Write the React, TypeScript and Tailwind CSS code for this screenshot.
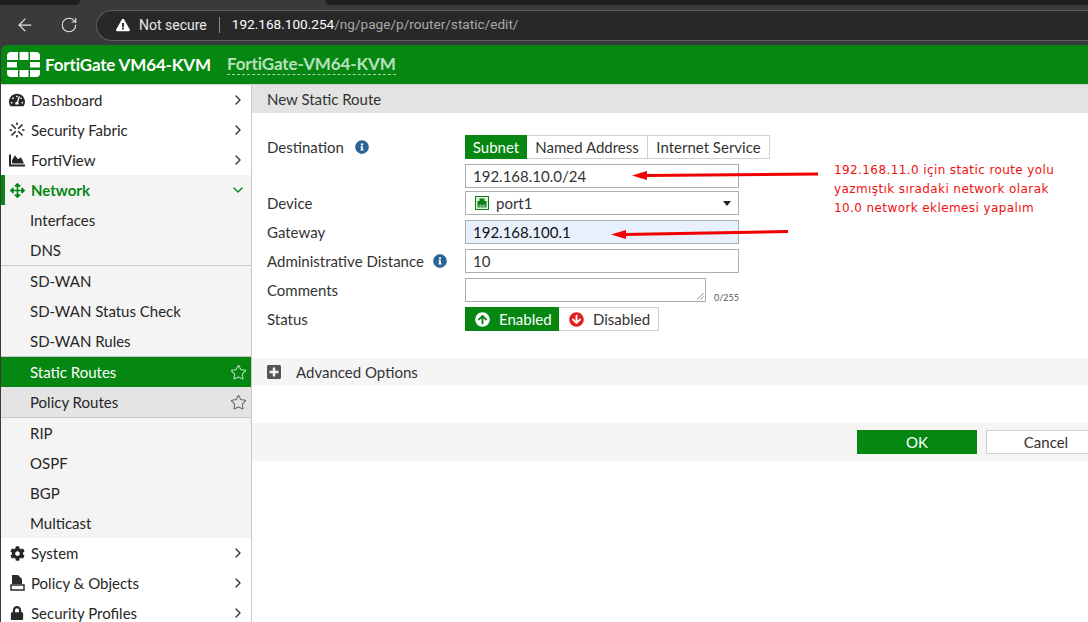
import { ArrowLeft, ChevronDown, ChevronRight, RotateCw, Star } from 'lucide-react';
import type { ReactNode } from 'react';
import {
  FaArrowCircleDown,
  FaArrowCircleUp,
  FaArrowsAlt,
  FaChartArea,
  FaCog,
  FaExclamationTriangle,
  FaInfoCircle,
  FaLock,
  FaPlusSquare,
  FaTachometerAlt,
} from 'react-icons/fa';

function FortiLogo() {
  return (
    <svg width="33" height="25" viewBox="0 0 33 25" fill="#fff">
      <path d="M0 8V4a4 4 0 0 1 4-4h7v8z" />
      <rect x="12.500" y="0" width="9" height="8" />
      <path d="M23 0h6a4 4 0 0 1 4 4v4H23z" />
      <rect x="0" y="10" width="10" height="5.500" />
      <rect x="23" y="10" width="10" height="5.500" />
      <path d="M0 18v3a4 4 0 0 0 4 4h7v-7z" />
      <rect x="12.500" y="18" width="9" height="7" />
      <path d="M23 18h10v3a4 4 0 0 1-4 4h-6z" />
    </svg>
  );
}

function FabricIcon() {
  return (
    <svg width="16" height="16" viewBox="0 0 16 16" fill="none" stroke="#2b2b2b" strokeWidth="1.600">
      <path d="M2.500 2.500L6.800 6.800M13.500 2.500L9.200 6.800M2.500 13.500L6.800 9.200M13.500 13.500L9.200 9.200" />
      <path d="M0.500 8H3M13 8h2.500M8 0.500V3M8 13v2.500" />
    </svg>
  );
}

function PolicyIcon() {
  return (
    <svg width="15" height="16" viewBox="0 0 15 16">
      <path d="M2 0h6l4 4v5H2z" fill="#2b2b2b" />
      <path d="M1 10h13v5H1z" fill="#fff" stroke="#2b2b2b" strokeWidth="1.500" />
    </svg>
  );
}

function PortIcon() {
  return (
    <svg width="14" height="14" viewBox="0 0 14 14">
      <rect x="0.500" y="0.500" width="13" height="13" fill="#dff0df" stroke="#0a7f14" />
      <path d="M2.500 5h2V2.500h5V5h2v6.500h-9z" fill="#0a7f14" />
      <path d="M4 8.500v3M5.500 8.500v3M7 8.500v3M8.500 8.500v3M10 8.500v3" stroke="#dff0df" strokeWidth="0.600" />
    </svg>
  );
}

function TopItem({ icon, label }: { icon: ReactNode; label: string }) {
  return (
    <div className="flex h-[30px] items-center pl-[8px] pr-[5px] text-[#262626]">
      <span className="flex w-[16px] justify-center">{icon}</span>
      <span className="ml-[6px] flex-1">{label}</span>
      <ChevronRight size={16} strokeWidth={2} className="text-[#333]" />
    </div>
  );
}

function SubItem({ label }: { label: string }) {
  return <div className="flex h-[30px] items-center pl-[29px] text-[#262626]">{label}</div>;
}

function FormRow({ label, info, children }: { label: string; info?: boolean; children: ReactNode }) {
  return (
    <div className="flex items-center">
      <div className="flex w-[198px] items-center text-[#333]">
        <span>{label}</span>
        {info && <FaInfoCircle size={14} className="ml-[9px] text-[#2a6496]" />}
      </div>
      {children}
    </div>
  );
}

export default function App() {
  return (
    <div className="relative h-[622px] w-[1088px] overflow-hidden bg-[#3a3a3a] font-['Lato','Noto_Sans',sans-serif] text-[15px] leading-none">
      {/* browser chrome */}
      <div className="flex h-[5px] justify-between">
        <div className="w-[80px] rounded-br-md bg-[#1f1f1f]" />
        <div className="w-[763px] rounded-bl-md bg-[#1f1f1f]" />
      </div>
      <div className="flex h-[40px] items-center font-['Roboto',sans-serif]">
        <ArrowLeft size={20} strokeWidth={1.5} className="ml-[15px] text-[#e3e3e3]" />
        <RotateCw size={18} strokeWidth={1.5} className="ml-[25px] text-[#e3e3e3]" />
        <div className="ml-[18px] flex h-[31px] flex-1 items-center rounded-l-[16px] border border-r-0 border-[#5e5e5e] bg-[#282828] pl-[19px] text-[14px]">
          <FaExclamationTriangle size={14} className="text-white" />
          <span className="ml-[9px] text-[#e8e8e8]">Not secure</span>
          <span className="ml-[12px] h-[16px] w-px bg-[#8a8a8a]" />
          <span className="ml-[12px] text-[13.6px] text-white">192.168.100.254</span>
          <span className="text-[13.6px] text-[#a9a9a9]">/ng/page/p/router/static/edit/</span>
        </div>
      </div>

      {/* fortigate header */}
      <div className="ml-px flex h-[39px] items-center rounded-tl-[6px] bg-[#058711] pl-[6px]">
        <FortiLogo />
        <span className="ml-[5px] text-[17px] font-bold tracking-[-0.15px] text-white">FortiGate VM64-KVM</span>
        <span className="ml-[16px] border-b border-dashed border-[#a5d6a9] pb-[2px] text-[17px] font-bold tracking-[-0.12px] text-[#b9e0bc]">
          FortiGate-VM64-KVM
        </span>
      </div>

      <div className="ml-px flex h-[538px] border-t border-[#d0d0d0] bg-white">
        {/* sidebar */}
        <div className="w-[251px] shrink-0 border-r border-[#c8c8c8] bg-white">
          <TopItem icon={<FaTachometerAlt size={16} />} label="Dashboard" />
          <TopItem icon={<FabricIcon />} label="Security Fabric" />
          <TopItem icon={<FaChartArea size={17} />} label="FortiView" />
          <div className="bg-[#f4f4f4]">
            <div className="flex h-[30px] items-center border-l-[4px] border-[#058711] pl-[4px] pr-[5px] font-bold text-[#058711]">
              <span className="flex w-[16px] justify-center">
                <FaArrowsAlt size={15} />
              </span>
              <span className="ml-[6px] flex-1">Network</span>
              <ChevronDown size={16} strokeWidth={2} />
            </div>
            <SubItem label="Interfaces" />
            <SubItem label="DNS" />
            <div className="border-t border-[#c8c8c8]" />
            <SubItem label="SD-WAN" />
            <SubItem label="SD-WAN Status Check" />
            <SubItem label="SD-WAN Rules" />
            <div className="border-t border-[#c8c8c8]" />
            <div className="flex h-[30px] items-center justify-between bg-[#058711] pl-[29px] pr-[4px] text-white">
              <span>Static Routes</span>
              <Star size={17} strokeWidth={1.5} className="text-[#b9e0bc]" />
            </div>
            <div className="flex h-[30px] items-center justify-between bg-[#e4e4e4] pl-[29px] pr-[4px] text-[#262626]">
              <span>Policy Routes</span>
              <Star size={17} strokeWidth={1.5} className="text-[#666]" />
            </div>
            <div className="border-t border-[#c8c8c8]" />
            <SubItem label="RIP" />
            <SubItem label="OSPF" />
            <SubItem label="BGP" />
            <SubItem label="Multicast" />
          </div>
          <TopItem icon={<FaCog size={15} />} label="System" />
          <TopItem icon={<PolicyIcon />} label="Policy & Objects" />
          <TopItem icon={<FaLock size={14} />} label="Security Profiles" />
        </div>

        {/* main */}
        <div className="min-w-0 flex-1">
          <div className="flex h-[28px] items-center bg-[#e3e3e3] pl-[15px] text-[#333]">New Static Route</div>

          <div className="flex flex-col gap-[5px] pl-[15px] pt-[22px]">
            <div className="flex">
              <div className="flex h-[24px] w-[198px] items-center text-[#333]">
                <span>Destination</span>
                <FaInfoCircle size={14} className="ml-[11px] text-[#2a6496]" />
              </div>
              <div className="flex flex-col gap-[5px]">
                <div className="flex h-[24px] w-[305px] border border-[#d0d0d0] text-[#333]">
                  <div className="-m-px flex w-[62px] items-center justify-center bg-[#058711] text-white">Subnet</div>
                  <div className="ml-px flex w-[121px] items-center justify-center border-r border-[#d0d0d0]">Named Address</div>
                  <div className="flex flex-1 items-center justify-center">Internet Service</div>
                </div>
                <div className="flex h-[24px] w-[274px] items-center border border-[#adadad] pl-[7px] text-[#333]">192.168.10.0/24</div>
              </div>
            </div>
            <div className="-mt-[2px]">
              <FormRow label="Device">
                <div className="flex h-[24px] w-[274px] items-center border border-[#adadad] pl-[9px] pr-[6px] text-[#333]">
                  <PortIcon />
                  <span className="ml-[7px] flex-1">port1</span>
                  <span className="mr-px h-0 w-0 border-x-[4.500px] border-t-[5px] border-x-transparent border-t-[#222]" />
                </div>
              </FormRow>
            </div>
            <FormRow label="Gateway">
              <div className="flex h-[24px] w-[274px] items-center border border-[#adadad] bg-[#e8f0fe] pl-[7px] text-[#111]">192.168.100.1</div>
            </FormRow>
            <FormRow label="Administrative Distance" info>
              <div className="flex h-[24px] w-[274px] items-center border border-[#adadad] pl-[7px] text-[#333]">10</div>
            </FormRow>
            <FormRow label="Comments">
              <div className="relative h-[24px] w-[241px] border border-[#adadad]">
                <svg width="8" height="8" viewBox="0 0 8 8" className="absolute bottom-px right-px" stroke="#666" strokeWidth="0.800">
                  <path d="M1 7.500L7.500 1M4.500 7.500L7.500 4.500" />
                </svg>
              </div>
              <span className="ml-[8px] self-end text-[9px] text-[#555]">0/255</span>
            </FormRow>
            <FormRow label="Status">
              <div className="flex h-[24px] text-[#333]">
                <div className="flex w-[94px] items-center bg-[#058711] pl-[10px] text-white">
                  <FaArrowCircleUp size={15} />
                  <span className="ml-[9px]">Enabled</span>
                </div>
                <div className="flex w-[100px] items-center border border-l-0 border-[#d0d0d0] pl-[10px]">
                  <FaArrowCircleDown size={15} className="text-[#e02020]" />
                  <span className="ml-[9px]">Disabled</span>
                </div>
              </div>
            </FormRow>
          </div>

          <div className="mt-[27px] flex h-[27px] items-center bg-[#f5f5f5] pl-[15px] text-[#333]">
            <FaPlusSquare size={16} className="-ml-px text-[#555]" />
            <span className="ml-[14px] pt-[2px]">Advanced Options</span>
          </div>

          <div className="mt-[38px] flex h-[38px] items-center bg-[#f5f5f5] pl-[605px]">
            <div className="flex h-[24px] w-[120px] shrink-0 items-center justify-center bg-[#058711] text-white">OK</div>
            <div className="ml-[9px] flex h-[24px] w-[120px] shrink-0 items-center justify-center border border-[#cfcfcf] bg-white text-[#333]">Cancel</div>
          </div>
        </div>
      </div>

      {/* red annotations drawn over the screenshot */}
      <svg width="1088" height="622" className="pointer-events-none absolute left-0 top-0">
        <path d="M646 175.500L818 174" stroke="#f00000" strokeWidth="3" />
        <path d="M632 175.500L647 171V180z" fill="#f00000" />
        <path d="M624 234.500L788 231.500" stroke="#f00000" strokeWidth="3" />
        <path d="M611 234.500L626 230V239z" fill="#f00000" />
      </svg>
      <div className="absolute left-[834px] top-[161px] font-['DejaVu_Sans',sans-serif] text-[12px] leading-[19px] tracking-[0.4px] text-[#f01010]">
        <div>192.168.11.0 için static route yolu</div>
        <div>yazmıştık sıradaki network olarak</div>
        <div>10.0 network eklemesi yapalım</div>
      </div>
    </div>
  );
}
